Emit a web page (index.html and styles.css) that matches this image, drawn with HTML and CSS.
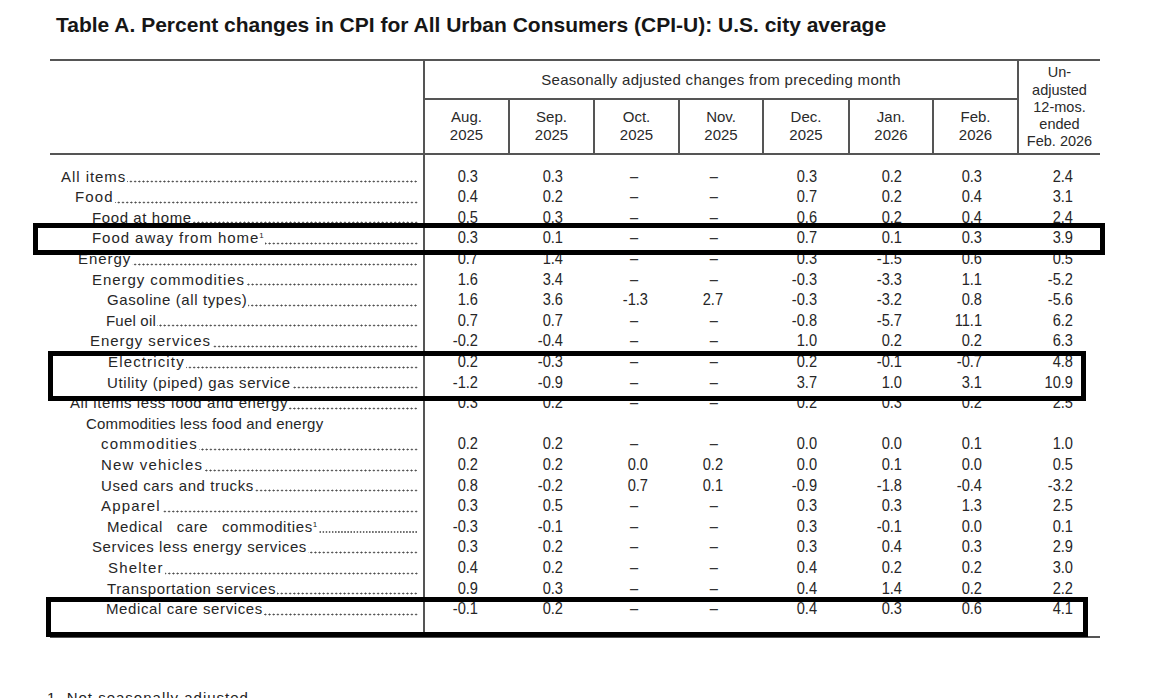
FILE: index.html
```html
<!DOCTYPE html>
<html lang="en">
<head>
<meta charset="utf-8">
<title>Table A. Percent changes in CPI</title>
<link rel="stylesheet" href="styles.css">
</head>
<body>
<div class="page">
  <h1 class="title">Table A. Percent changes in CPI for All Urban Consumers (CPI-U): U.S. city average</h1>

  <div class="table">
    <div class="thead">
      <div class="stub"></div>
      <div class="span-head">Seasonally adjusted changes from preceding month</div>
      <div class="unadj-head">Un-<br>adjusted<br>12-mos.<br>ended<br>Feb. 2026</div>
      <div class="mon">Aug.<br>2025</div>
      <div class="mon">Sep.<br>2025</div>
      <div class="mon">Oct.<br>2025</div>
      <div class="mon">Nov.<br>2025</div>
      <div class="mon">Dec.<br>2025</div>
      <div class="mon">Jan.<br>2026</div>
      <div class="mon">Feb.<br>2026</div>
    </div>

    <div class="tbody">
      <div class="row"><div class="lab in11 ls-w"><span class="txt">All items</span><span class="dots"></span></div><div class="v">0.3</div><div class="v">0.3</div><div class="v"><span class="d">–</span></div><div class="v"><span class="d">–</span></div><div class="v">0.3</div><div class="v">0.2</div><div class="v">0.3</div><div class="v">2.4</div></div>
      <div class="row"><div class="lab in25 ls-x"><span class="txt">Food</span><span class="dots"></span></div><div class="v">0.4</div><div class="v">0.2</div><div class="v"><span class="d">–</span></div><div class="v"><span class="d">–</span></div><div class="v">0.7</div><div class="v">0.2</div><div class="v">0.4</div><div class="v">3.1</div></div>
      <div class="row"><div class="lab in41 ls-n"><span class="txt">Food at home</span><span class="dots"></span></div><div class="v">0.5</div><div class="v">0.3</div><div class="v"><span class="d">–</span></div><div class="v"><span class="d">–</span></div><div class="v">0.6</div><div class="v">0.2</div><div class="v">0.4</div><div class="v">2.4</div></div>
      <div class="row"><div class="lab in41 ls-w"><span class="txt">Food away from home<sup>1</sup></span><span class="dots"></span></div><div class="v">0.3</div><div class="v">0.1</div><div class="v"><span class="d">–</span></div><div class="v"><span class="d">–</span></div><div class="v">0.7</div><div class="v">0.1</div><div class="v">0.3</div><div class="v">3.9</div></div>
      <div class="row"><div class="lab in28 ls-w"><span class="txt">Energy</span><span class="dots"></span></div><div class="v">0.7</div><div class="v">1.4</div><div class="v"><span class="d">–</span></div><div class="v"><span class="d">–</span></div><div class="v">0.3</div><div class="v">-1.5</div><div class="v">0.6</div><div class="v">0.5</div></div>
      <div class="row"><div class="lab in41 ls-w"><span class="txt">Energy commodities</span><span class="dots"></span></div><div class="v">1.6</div><div class="v">3.4</div><div class="v"><span class="d">–</span></div><div class="v"><span class="d">–</span></div><div class="v">-0.3</div><div class="v">-3.3</div><div class="v">1.1</div><div class="v">-5.2</div></div>
      <div class="row"><div class="lab in57 ls-n"><span class="txt">Gasoline (all types)</span><span class="dots"></span></div><div class="v">1.6</div><div class="v">3.6</div><div class="v">-1.3</div><div class="v">2.7</div><div class="v">-0.3</div><div class="v">-3.2</div><div class="v">0.8</div><div class="v">-5.6</div></div>
      <div class="row"><div class="lab in56 ls-t"><span class="txt">Fuel oil</span><span class="dots"></span></div><div class="v">0.7</div><div class="v">0.7</div><div class="v"><span class="d">–</span></div><div class="v"><span class="d">–</span></div><div class="v">-0.8</div><div class="v">-5.7</div><div class="v">11.1</div><div class="v">6.2</div></div>
      <div class="row"><div class="lab in40 ls-w"><span class="txt">Energy services</span><span class="dots"></span></div><div class="v">-0.2</div><div class="v">-0.4</div><div class="v"><span class="d">–</span></div><div class="v"><span class="d">–</span></div><div class="v">1.0</div><div class="v">0.2</div><div class="v">0.2</div><div class="v">6.3</div></div>
      <div class="row"><div class="lab in58 ls-x"><span class="txt">Electricity</span><span class="dots"></span></div><div class="v">0.2</div><div class="v">-0.3</div><div class="v"><span class="d">–</span></div><div class="v"><span class="d">–</span></div><div class="v">0.2</div><div class="v">-0.1</div><div class="v">-0.7</div><div class="v">4.8</div></div>
      <div class="row"><div class="lab in57 ls-n"><span class="txt">Utility (piped) gas service</span><span class="dots"></span></div><div class="v">-1.2</div><div class="v">-0.9</div><div class="v"><span class="d">–</span></div><div class="v"><span class="d">–</span></div><div class="v">3.7</div><div class="v">1.0</div><div class="v">3.1</div><div class="v">10.9</div></div>
      <div class="row"><div class="lab in20 ls-n"><span class="txt">All items less food and energy</span><span class="dots"></span></div><div class="v">0.3</div><div class="v">0.2</div><div class="v"><span class="d">–</span></div><div class="v"><span class="d">–</span></div><div class="v">0.2</div><div class="v">0.3</div><div class="v">0.2</div><div class="v">2.5</div></div>
      <div class="row"><div class="lab in36 ls-t"><span class="txt">Commodities less food and energy</span></div><div class="v"></div><div class="v"></div><div class="v"></div><div class="v"></div><div class="v"></div><div class="v"></div><div class="v"></div><div class="v"></div></div>
      <div class="row"><div class="lab in51 ls-x"><span class="txt">commodities</span><span class="dots"></span></div><div class="v">0.2</div><div class="v">0.2</div><div class="v"><span class="d">–</span></div><div class="v"><span class="d">–</span></div><div class="v">0.0</div><div class="v">0.0</div><div class="v">0.1</div><div class="v">1.0</div></div>
      <div class="row"><div class="lab in51 ls-x"><span class="txt">New vehicles</span><span class="dots"></span></div><div class="v">0.2</div><div class="v">0.2</div><div class="v">0.0</div><div class="v">0.2</div><div class="v">0.0</div><div class="v">0.1</div><div class="v">0.0</div><div class="v">0.5</div></div>
      <div class="row"><div class="lab in51 ls-n"><span class="txt">Used cars and trucks</span><span class="dots"></span></div><div class="v">0.8</div><div class="v">-0.2</div><div class="v">0.7</div><div class="v">0.1</div><div class="v">-0.9</div><div class="v">-1.8</div><div class="v">-0.4</div><div class="v">-3.2</div></div>
      <div class="row"><div class="lab in51 ls-x"><span class="txt">Apparel</span><span class="dots"></span></div><div class="v">0.3</div><div class="v">0.5</div><div class="v"><span class="d">–</span></div><div class="v"><span class="d">–</span></div><div class="v">0.3</div><div class="v">0.3</div><div class="v">1.3</div><div class="v">2.5</div></div>
      <div class="row"><div class="lab in57 ls-n spaced"><span class="txt">Medical care commodities<sup>1</sup></span><span class="dots small"></span></div><div class="v">-0.3</div><div class="v">-0.1</div><div class="v"><span class="d">–</span></div><div class="v"><span class="d">–</span></div><div class="v">0.3</div><div class="v">-0.1</div><div class="v">0.0</div><div class="v">0.1</div></div>
      <div class="row"><div class="lab in41 ls-n"><span class="txt">Services less energy services</span><span class="dots"></span></div><div class="v">0.3</div><div class="v">0.2</div><div class="v"><span class="d">–</span></div><div class="v"><span class="d">–</span></div><div class="v">0.3</div><div class="v">0.4</div><div class="v">0.3</div><div class="v">2.9</div></div>
      <div class="row"><div class="lab in58 ls-x"><span class="txt">Shelter</span><span class="dots"></span></div><div class="v">0.4</div><div class="v">0.2</div><div class="v"><span class="d">–</span></div><div class="v"><span class="d">–</span></div><div class="v">0.4</div><div class="v">0.2</div><div class="v">0.2</div><div class="v">3.0</div></div>
      <div class="row"><div class="lab in57 ls-n"><span class="txt">Transportation services</span><span class="dots"></span></div><div class="v">0.9</div><div class="v">0.3</div><div class="v"><span class="d">–</span></div><div class="v"><span class="d">–</span></div><div class="v">0.4</div><div class="v">1.4</div><div class="v">0.2</div><div class="v">2.2</div></div>
      <div class="row"><div class="lab in56 ls-n"><span class="txt">Medical care services</span><span class="dots"></span></div><div class="v">-0.1</div><div class="v">0.2</div><div class="v"><span class="d">–</span></div><div class="v"><span class="d">–</span></div><div class="v">0.4</div><div class="v">0.3</div><div class="v">0.6</div><div class="v">4.1</div></div>
    </div>
  </div>

  <p class="footnote">1&nbsp; Not seasonally adjusted.</p>

  <div class="hl hl-food"></div>
  <div class="hl hl-energy"></div>
  <div class="hl hl-medical"></div>
</div>
</body>
</html>
```

FILE: styles.css
```css
* { box-sizing: border-box; }

html, body {
  margin: 0;
  padding: 0;
  background: #ffffff;
}

body {
  font-family: "Liberation Sans", Arial, sans-serif;
  color: #222222;
  width: 1173px;
  height: 698px;
  overflow: hidden;
}

.page {
  position: relative;
  padding: 13.4px 0 0 47px;
  height: 698px;
}

.title {
  margin: 0 0 0 9px;
  font-size: 21px;
  line-height: 24px;
  font-weight: bold;
  color: #161616;
  white-space: nowrap;
}

.table {
  margin: 21.6px 0 0 3px;
  width: 1050px;
}

/* ---------- header ---------- */
.thead {
  display: grid;
  grid-template-columns: 373px 85px 85px 85px 84px 86px 84px 85px 83px;
  grid-template-rows: 39px 53px;
  border-top: 2px solid #555555;
  border-bottom: 2px solid #555555;
  font-size: 15px;
  color: #2a2a2a;
}

.stub {
  grid-column: 1;
  grid-row: 1 / 3;
}

.span-head {
  grid-column: 2 / 9;
  grid-row: 1;
  border-left: 2px solid #555555;
  border-bottom: 2px solid #555555;
  display: flex;
  align-items: center;
  justify-content: center;
  letter-spacing: 0.3px;
}

.unadj-head {
  grid-column: 9;
  grid-row: 1 / 3;
  border-left: 2px solid #555555;
  display: flex;
  align-items: center;
  justify-content: center;
  text-align: center;
  font-size: 14.5px;
  line-height: 17.2px;
  padding-top: 1px;
}

.mon {
  grid-row: 2;
  border-left: 2px solid #555555;
  display: flex;
  align-items: center;
  justify-content: center;
  text-align: center;
  line-height: 18px;
}

/* ---------- body ---------- */
.tbody {
  padding: 11.7px 0 16.6px;
  border-bottom: 2px solid #555555;
  background: linear-gradient(to right, transparent 373px, #555555 373px, #555555 375px, transparent 375px);
}

.row {
  display: grid;
  grid-template-columns: 373px 85px 85px 85px 84px 86px 84px 85px 83px;
  height: 20.6px;
  align-items: center;
}

.lab {
  display: flex;
  align-items: stretch;
  height: 20.6px;
  font-size: 15px;
  line-height: 20.6px;
  color: #262626;
  padding-right: 5px;
  white-space: nowrap;
}

.txt {
  flex: none;
}

.txt sup {
  font-size: 8px;
  line-height: 0;
  vertical-align: 5px;
  letter-spacing: 0;
}

/* dotted leaders between a label and its values */
.dots {
  flex: 1 1 auto;
  min-width: 0;
  margin-left: 1px;
  background-image: radial-gradient(circle at center, #4a4a4a 0.75px, rgba(74, 74, 74, 0) 1.2px);
  background-size: 4.2px 3px;
  background-repeat: repeat-x;
  background-position: right 0 bottom 4px;
}

.dots.small {
  background-image: radial-gradient(circle at center, #4a4a4a 0.55px, rgba(74, 74, 74, 0) 0.95px);
  background-size: 3.1px 2px;
  background-position: right 0 bottom 4.5px;
}

.spaced .txt { word-spacing: 9px; }

.ls-t { letter-spacing: 0.2px; }
.ls-n { letter-spacing: 0.6px; }
.ls-w { letter-spacing: 0.95px; }
.ls-x { letter-spacing: 1.15px; }

.in11 { padding-left: 11px; }
.in20 { padding-left: 20px; }
.in25 { padding-left: 25px; }
.in28 { padding-left: 28px; }
.in36 { padding-left: 36px; }
.in40 { padding-left: 40px; }
.in41 { padding-left: 42px; }
.in51 { padding-left: 51px; }
.in56 { padding-left: 56px; }
.in57 { padding-left: 57px; }
.in58 { padding-left: 58px; }

/* numbers: narrow figures, right aligned inside each column */
.v {
  font-size: 17px;
  line-height: 20.6px;
  text-align: right;
  color: #262626;
  transform: scaleX(0.86);
  transform-origin: right center;
}

.row > .v:nth-child(2) { padding-right: 34.9px; }
.row > .v:nth-child(3) { padding-right: 34.9px; }
.row > .v:nth-child(4) { padding-right: 34.9px; }
.row > .v:nth-child(5) { padding-right: 45.3px; }
.row > .v:nth-child(6) { padding-right: 36px; }
.row > .v:nth-child(7) { padding-right: 34.9px; }
.row > .v:nth-child(8) { padding-right: 40.7px; }
.row > .v:nth-child(9) { padding-right: 31.4px; }

.d { color: #333333; }
.row > .v:nth-child(4) .d { margin-right: 11.6px; }
.row > .v:nth-child(5) .d { margin-right: 5.9px; }

/* ---------- footnote ---------- */
.footnote {
  margin: 50.5px 0 0 0;
  font-size: 15px;
  line-height: 18px;
  letter-spacing: 1px;
  color: #222222;
}

/* ---------- highlight boxes drawn over the table ---------- */
.hl {
  position: absolute;
  border: 5px solid #000000;
  pointer-events: none;
}

.hl-food    { left: 33px; top: 223px; width: 1072px; height: 32px; }
.hl-energy  { left: 48px; top: 351px; width: 1038px; height: 50px; }
.hl-medical { left: 46px; top: 597px; width: 1042px; height: 40px; }
```
